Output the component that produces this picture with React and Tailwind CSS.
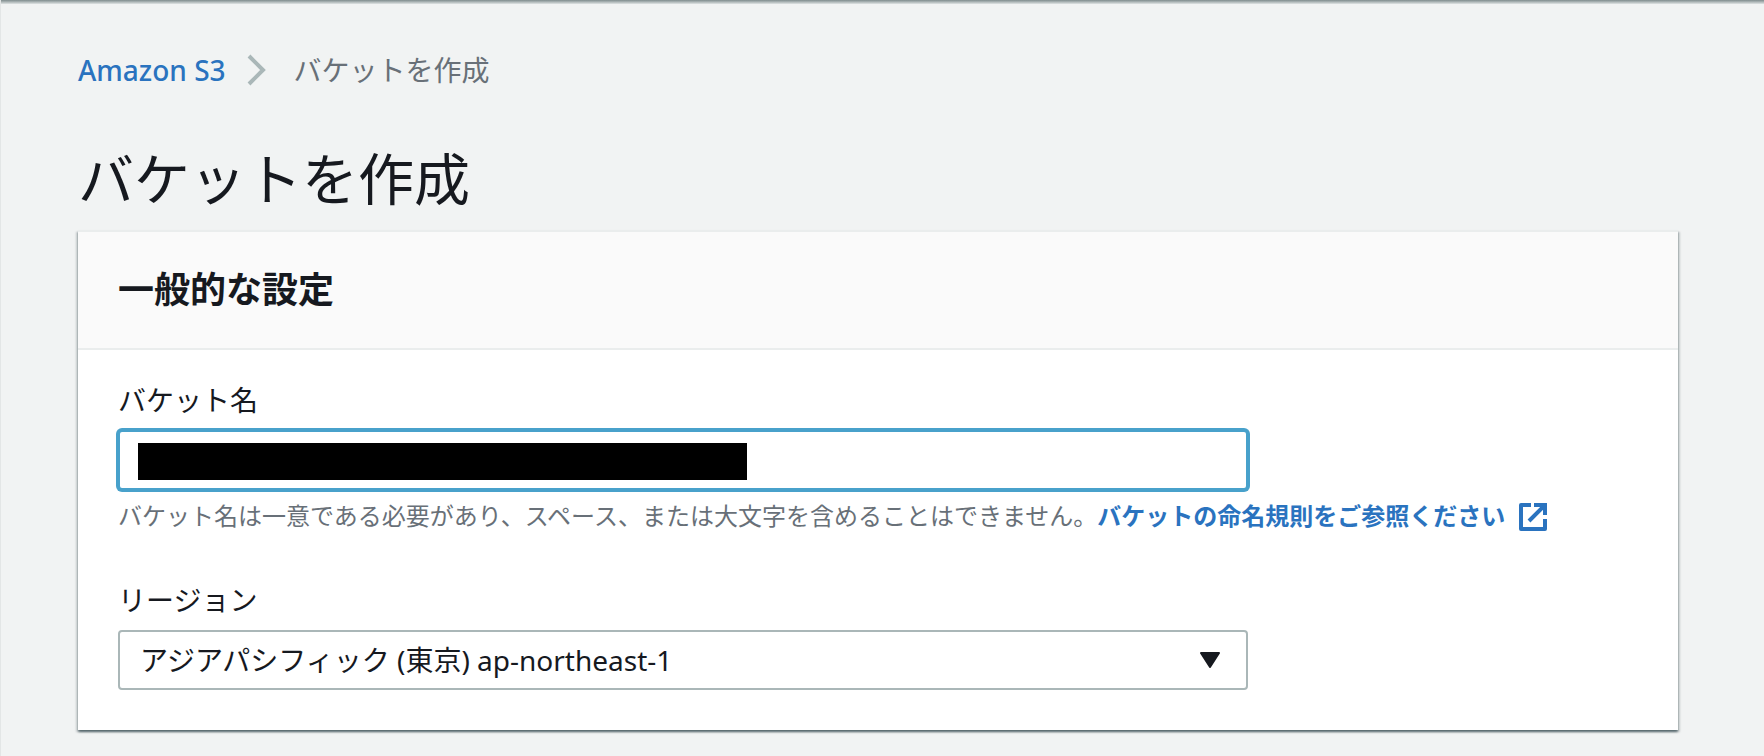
import React, { useState } from "react";

const regions = [
  { value: "ap-northeast-1", label: "アジアパシフィック (東京) ap-northeast-1" },
];

const ExternalLinkIcon = () => (
  <svg className="inline-block w-7 h-7 ml-3.5 align-[-6px]" viewBox="0 0 28 28" fill="none" stroke="currentColor" strokeWidth={4}>
    <path d="M12 2H2v24h24V16" strokeLinejoin="round" />
    <path d="M15 2h11v10M25 3L10 18" />
  </svg>
);

const Breadcrumb = () => (
  <nav className="flex items-center text-[28px] leading-9">
    <a href="#" className="font-medium text-[#2a73bf]">Amazon S3</a>
    <svg className="w-5 h-8 ml-5 mr-7" viewBox="0 0 20 32" fill="none" stroke="#aab7b8" strokeWidth={4}>
      <path d="M3 2l14 14L3 30" />
    </svg>
    <span className="text-[#687078]">バケットを作成</span>
  </nav>
);

const App = () => {
  const [region, setRegion] = useState("ap-northeast-1");

  return (
    <div className="min-h-screen bg-[#f1f3f3] border-l border-[#e3e6e6] text-[#16191f] font-['Noto_Sans','Noto_Sans_CJK_JP',sans-serif]">
      {/* Bottom edge of the console header */}
      <div className="h-1 bg-linear-to-b from-[#7f8c8d] to-[#e0e4e4]" />

      <main className="pl-[77px] pr-[86px] pt-12 pb-6">
        <Breadcrumb />

        <h1 className="mt-13 mb-3.5 text-[56px] leading-[76px]">バケットを作成</h1>

        <section className="bg-white border-t-2 border-[#eaeded] shadow-[0_2px_2px_rgba(0,28,36,0.5),2px_2px_2px_rgba(0,28,36,0.15),-2px_2px_2px_rgba(0,28,36,0.15)]">
          <header className="px-10 py-9 bg-[#fafafa] border-b-2 border-[#eaeded]">
            <h2 className="text-4xl leading-11 font-bold">一般的な設定</h2>
          </header>

          <div className="px-10 pt-7 pb-10">
            {/* Bucket name */}
            <label htmlFor="bucket-name" className="block mb-2 text-[28px] leading-11">
              バケット名
            </label>
            <div className="relative max-w-[1130px]">
              <input
                id="bucket-name"
                type="text"
                className="block w-full h-15 px-5 bg-white rounded-sm border-2 border-[#48a1cb] ring-2 ring-[#48a1cb] text-[28px] outline-none"
              />
              <div className="absolute left-5 top-[13px] w-[609px] max-w-full h-[37px] bg-black" />
            </div>
            <p className="mt-2 text-2xl leading-9 text-[#687078]">
              バケット名は一意である必要があり、スペース、または大文字を含めることはできません。
              <a href="#" className="font-bold text-[#2a73bf]">
                バケットの命名規則をご参照ください
                <ExternalLinkIcon />
              </a>
            </p>

            {/* Region */}
            <label htmlFor="region" className="block mt-11 mb-2 text-[28px] leading-11">
              リージョン
            </label>
            <div className="relative max-w-[1130px]">
              <select
                id="region"
                value={region}
                onChange={(e) => setRegion(e.target.value)}
                className="block w-full h-15 pl-5 pr-16 appearance-none bg-white rounded-sm border-2 border-[#aab7b8] text-[28px]"
              >
                {regions.map((r) => (
                  <option key={r.value} value={r.value}>{r.label}</option>
                ))}
              </select>
              <svg className="absolute right-7 top-1/2 -translate-y-1/2 w-5 h-4 pointer-events-none" viewBox="0 0 20 16" fill="#16191f" stroke="#16191f" strokeWidth={2} strokeLinejoin="round">
                <path d="M1 1h18l-9 14z" />
              </svg>
            </div>
          </div>
        </section>
      </main>
    </div>
  );
};

export default App;
